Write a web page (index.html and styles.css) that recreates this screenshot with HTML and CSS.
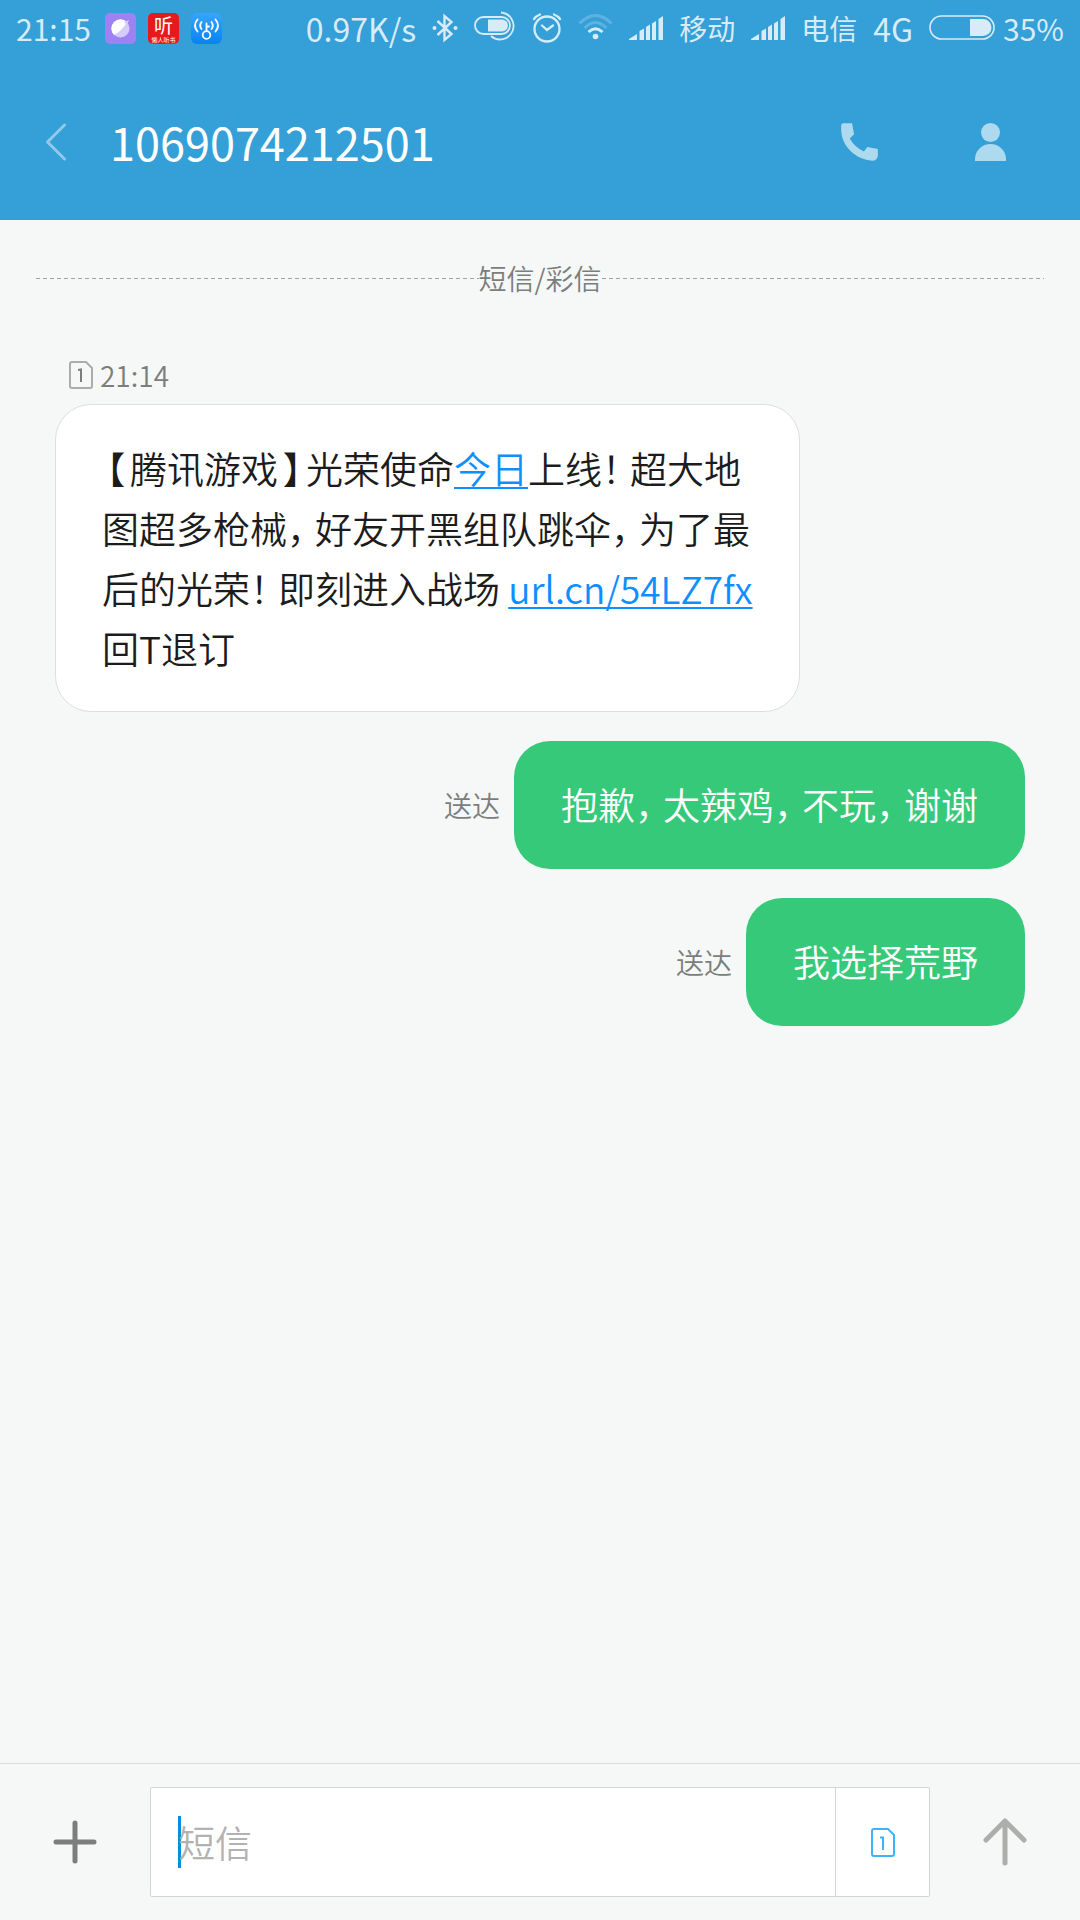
FILE: index.html
```html
<!DOCTYPE html>
<html lang="zh-CN">
<head>
<meta charset="utf-8">
<meta name="viewport" content="width=device-width, initial-scale=1">
<title>1069074212501</title>
<link rel="stylesheet" href="styles.css">
</head>
<body>
<header class="top">
  <div class="status">
    <div class="status-left">
      <span class="clock">21:15</span>
      <svg class="app" viewBox="0 0 31 31" aria-hidden="true"><rect width="31" height="31" rx="5" fill="#9c82f2"/><circle cx="15.500" cy="15.500" r="9" fill="#d6ccfb"/><path d="M9 22A9 9 0 1 1 22 9Q17 18 9 22Z" fill="#fff"/><path d="M19 9L24 7L22 12Z" fill="#d6ccfb"/></svg>
      <svg class="app" viewBox="0 0 31 31" aria-hidden="true"><rect width="31" height="31" rx="5" fill="#e51b1b"/><text x="15.500" y="20" class="app-big">听</text><text x="15.500" y="29" class="app-small">懒人听书</text></svg>
      <svg class="app" viewBox="0 0 31 31" aria-hidden="true"><defs><linearGradient id="wifi-key" x2="0" y2="1"><stop stop-color="#36a5ff"/><stop offset="1" stop-color="#0783ef"/></linearGradient></defs><rect width="31" height="31" rx="6" fill="url(#wifi-key)"/><g fill="none" stroke="#fff" stroke-width="1.800" stroke-linecap="round"><circle cx="15.500" cy="22" r="3.800"/><path d="M15.500 18V10.500M15.500 13.500H18M10.500 9Q8 12.500 10.500 16M6.500 6.500Q1.500 12.500 6.500 18.500M20.500 9Q23 12.500 20.500 16M24.500 6.500Q29.500 12.500 24.500 18.500"/></g></svg>
    </div>
    <div class="status-right">
      <span class="net">0.97K/s</span>
      <svg width="26" height="30" viewBox="0 0 26 30" aria-hidden="true"><path d="M5.500 8L19.500 21L12.500 27V3L19.500 9L5.500 22" fill="none" stroke="currentColor" stroke-width="2.400"/><circle cx="2.500" cy="15" r="2" fill="currentColor"/><circle cx="23.500" cy="15" r="2" fill="currentColor"/></svg>
      <svg width="42" height="30" viewBox="0 0 42 30" aria-hidden="true"><g fill="none" stroke="currentColor" stroke-width="1.800"><rect x="1" y="4" width="35" height="17" rx="8.500"/><path d="M27 -.500A13.500 13.500 0 1 1 17 23"/></g><path d="M14 6.500H28A6 6 0 0 1 28 18.500H14Z" fill="currentColor"/></svg>
      <svg width="30" height="30" viewBox="0 0 30 30" aria-hidden="true"><g fill="none" stroke="currentColor" stroke-width="2.300" stroke-linecap="round"><circle cx="15" cy="16" r="12.500"/><path d="M10 12.500L15 17L21 12.500M2 6Q4 3 8 1.500M28 6Q26 3 22 1.500"/></g></svg>
      <svg width="35" height="30" viewBox="0 0 35 30" aria-hidden="true"><g fill="none" stroke="currentColor" stroke-width="3"><g opacity=".25"><path d="M1.500 10.500Q17.500-5.500 33.500 10.500"/><path d="M6.500 15Q17.500 4 28.500 15"/></g><path d="M10.500 19Q17.500 12.500 24.500 19"/></g><circle cx="17.500" cy="23.500" r="2.800" fill="currentColor"/></svg>
      <svg width="34" height="24" viewBox="0 0 34 24" aria-hidden="true"><path d="M0 24V23L8 18V24ZM10.500 24V15L15 12.500V24ZM17 24V11L21 8.500V24ZM23 24V7.500L27 5V24ZM29.500 24V3L34 0V24Z" fill="currentColor"/></svg>
      <span class="carrier">移动</span>
      <svg width="34" height="24" viewBox="0 0 34 24" aria-hidden="true"><path d="M0 24V23L8 18V24ZM10.500 24V15L15 12.500V24ZM17 24V11L21 8.500V24ZM23 24V7.500L27 5V24ZM29.500 24V3L34 0V24Z" fill="currentColor"/></svg>
      <span class="carrier">电信</span>
      <span class="net">4G</span>
      <span class="battery"><svg width="66" height="26" viewBox="0 0 66 26" aria-hidden="true"><rect x="1" y="1" width="64" height="23" rx="11.500" fill="none" stroke="currentColor" stroke-width="1.600"/><path d="M41 4H54A8.500 8.500 0 0 1 54 21H41Z" fill="currentColor"/></svg><span class="percent">35%</span></span>
    </div>
  </div>
  <div class="titlebar">
    <button class="icon-button" aria-label="返回"><svg width="22" height="40" viewBox="0 0 22 40"><path d="M19.500 3L2.500 20L19.500 37" fill="none" stroke="currentColor" stroke-width="3" stroke-linecap="round" stroke-linejoin="round" opacity=".75"/></svg></button>
    <h1>1069074212501</h1>
    <button class="icon-button" aria-label="拨打电话"><svg width="37" height="38" viewBox="0 0 111 115"><path d="M0 8Q0 1 7 1H33L39 34L26 47Q42 75 69 86L79 73L111 79V98Q109 114 94 114C45 112 0 70 0 20Z" fill="currentColor"/></svg></button>
    <button class="icon-button contact" aria-label="联系人"><svg width="31" height="38" viewBox="0 0 31 38"><circle cx="15.500" cy="9.500" r="9.500" fill="currentColor"/><path d="M0 38V36A15.500 15 0 0 1 31 36V38Z" fill="currentColor"/></svg></button>
  </div>
</header>

<main class="thread">
  <div class="channel"><span>短信/彩信</span></div>
  <div class="stamp"><svg width="24" height="28" viewBox="0 0 24 28" aria-hidden="true"><path d="M3 1H17L23 7V25Q23 27 21 27H3Q1 27 1 25V3Q1 1 3 1Z" fill="none" stroke="#aaadab" stroke-width="2"/><path d="M9 9L12 8.500V21" fill="none" stroke="#7c7e7d" stroke-width="2"/></svg><time>21:14</time></div>
  <p class="bubble received"><span class="punct bracket">【</span>腾讯游戏<span class="punct bracket">】</span>光荣使命<a href="#today">今日</a>上线<span class="punct">！</span>超大地<br>图超多枪械<span class="punct">，</span>好友开黑组队跳伞<span class="punct">，</span>为了最<br>后的光荣<span class="punct">！</span>即刻进入战场 <a href="#url">url.cn/54LZ7fx</a><br>回T退订</p>
  <div class="sent-row"><span class="delivery">送达</span><p class="bubble sent">抱歉<span class="punct">，</span>太辣鸡<span class="punct">，</span>不玩<span class="punct">，</span>谢谢</p></div>
  <div class="sent-row"><span class="delivery">送达</span><p class="bubble sent">我选择荒野</p></div>
</main>

<footer class="composer">
  <button class="side-button add" aria-label="添加"><svg width="44" height="44" viewBox="0 0 44 44"><path d="M22 3V41M3 22H41" stroke="currentColor" stroke-width="5" stroke-linecap="round"/></svg></button>
  <div class="field">
    <span class="caret"></span>
    <input type="text" placeholder="短信" aria-label="短信">
    <button class="sim" aria-label="卡1"><svg width="24" height="29" viewBox="0 0 24 29"><g fill="none" stroke="currentColor" stroke-width="2"><path d="M3 1H17L23 7V26Q23 28 21 28H3Q1 28 1 26V3Q1 1 3 1Z"/><path d="M9 9.500H12V22"/></g></svg></button>
  </div>
  <button class="side-button send" aria-label="发送"><svg width="44" height="48" viewBox="0 0 44 48"><path d="M22 45V3M3 22L22 3L41 22" fill="none" stroke="currentColor" stroke-width="5" stroke-linecap="round" stroke-linejoin="round"/></svg></button>
</footer>
</body>
</html>
```
FILE: styles.css
```css
* { box-sizing: border-box; }

body {
  margin: 0;
  min-height: 100vh;
  display: flex;
  flex-direction: column;
  background: #f5f8f7;
  color: #1c1c1c;
  font-family: "Noto Sans CJK SC", sans-serif;
  font-size: 37px;
  font-weight: 350;
}

button {
  border: 0;
  padding: 0;
  background: none;
  color: inherit;
  font: inherit;
  cursor: pointer;
}

svg { display: block; flex: none; overflow: visible; }

.top { background: #359fd7; color: #fff; }

.status {
  height: 56px;
  padding: 0 16px;
  display: flex;
  align-items: center;
  justify-content: space-between;
  color: #d7ecf7;
  font-weight: 400;
  line-height: 40px;
  white-space: nowrap;
}

.status-left { display: flex; align-items: center; gap: 12px; }
.status-right { display: flex; align-items: center; gap: 16px; }
.clock, .percent { font-size: 30px; }
.clock { margin-right: 2px; }
.net { font-size: 32px; }
.carrier { font-size: 28px; }
.app { width: 31px; height: 31px; }
.app-big { font-size: 19px; fill: #fff; text-anchor: middle; }
.app-small { font-size: 6px; fill: #fff; text-anchor: middle; }
.battery { display: flex; align-items: center; gap: 8px; }

.titlebar {
  height: 164px;
  padding: 8px 74px 0 45px;
  display: flex;
  align-items: center;
}

.titlebar h1 {
  flex: 1;
  margin: 0 0 0 43px;
  font-size: 45px;
  font-weight: 400;
  line-height: 60px;
}

.icon-button { color: #addaef; }
.contact { margin-left: 97px; }

.thread {
  flex: 1;
  padding: 38px 55px;
  display: flex;
  flex-direction: column;
}

.channel {
  margin: 0 -19px;
  display: flex;
  align-items: center;
  color: #7c7e7d;
  font-size: 28px;
  line-height: 40px;
}

.channel::before, .channel::after {
  content: "";
  flex: 1;
  height: 1px;
  background: repeating-linear-gradient(90deg, #a0a3a1 0 4px, transparent 4px 7px);
}

.stamp {
  margin: 57px 0 9px 14px;
  display: flex;
  align-items: center;
  gap: 7px;
  color: #7c7e7d;
  font-size: 28px;
  line-height: 40px;
}

.bubble {
  margin: 0;
  padding: 33px 47px 35px;
  border-radius: 36px;
  line-height: 60px;
  white-space: nowrap;
}

.received {
  align-self: flex-start;
  padding: 33px 46px;
  border: 1px solid #dcdfde;
  background: #fff;
}

.received a {
  color: #0f8fff;
  text-decoration-thickness: 2px;
  text-underline-offset: 3px;
}

.punct {
  display: inline-block;
  width: 28px;
  font-feature-settings: "halt";
}

.bracket { text-align: center; }

.sent-row {
  margin-top: 29px;
  display: flex;
  align-items: center;
  justify-content: flex-end;
  gap: 14px;
}

.delivery { color: #7c7e7d; font-size: 28px; }
.sent { background: #36c979; color: #fff; }

.composer {
  border-top: 1px solid #d8dbda;
  padding: 23px 0;
  display: flex;
  align-items: center;
}

.side-button {
  width: 150px;
  display: flex;
  justify-content: center;
}

.add { color: #7c7e7d; }
.send { color: #acaeac; }

.field {
  flex: 1;
  min-width: 0;
  height: 110px;
  border: 1px solid #d1d4d3;
  border-radius: 2px;
  display: flex;
  align-items: center;
  background: #fff;
}

.caret { width: 3px; height: 52px; margin: 0 -3px 0 27px; background: #0090dc; }

.field input {
  flex: 1;
  min-width: 0;
  height: 100%;
  border: 0;
  padding: 0;
  outline: 0;
  background: none;
  color: inherit;
  font: inherit;
}

.field input::placeholder { color: #b2b2b2; opacity: 1; }

.sim {
  width: 94px;
  height: 100%;
  border-left: 1px solid #d1d4d3;
  display: flex;
  align-items: center;
  justify-content: center;
  color: #3fb2ff;
}
```
